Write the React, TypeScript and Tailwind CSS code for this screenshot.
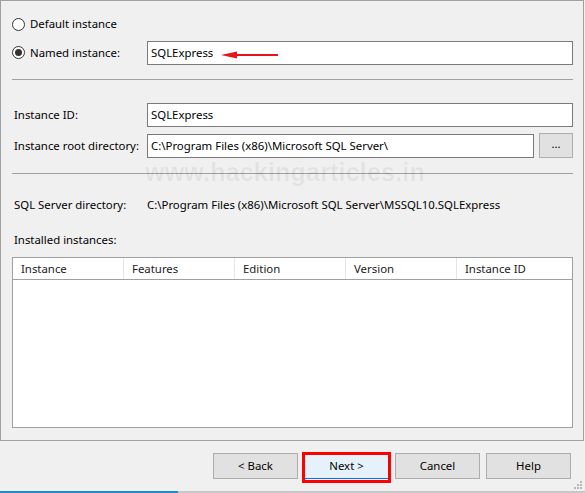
import React from "react";

const FONT = { fontFamily: '"Segoe UI", "Noto Sans", sans-serif' };

function Radio({ checked }: { checked?: boolean }) {
    return (
        <span className="flex h-[13px] w-[13px] items-center justify-center rounded-full border border-[#333333] bg-white">
            {checked && <span className="h-[7px] w-[7px] rounded-full bg-[#333333]" />}
        </span>
    );
}

function Btn({ label, primary }: { label: string; primary?: boolean }) {
    return (
        <div
            className={`flex h-[26px] w-[85px] items-center justify-center border text-black ${
                primary ? "border-[#0078d7] bg-[#e5f1fb]" : "border-[#adadad] bg-[#e1e1e1]"
            }`}
        >
            {label}
        </div>
    );
}

const COLUMNS = ["Instance", "Features", "Edition", "Version", "Instance ID"];

export default function App() {
    return (
        <div className="relative flex h-[493px] w-[585px] flex-col overflow-hidden bg-[#f0f0f0] text-[11.4px] text-black" style={FONT}>
            {/* Main panel */}
            <div className="box-border flex h-[441px] w-[584px] flex-col border border-[#a0a0a0] pl-[11px] pr-[10px]">
                {/* Default instance */}
                <div className="mt-[16px] flex h-[14px] items-center gap-[5px]">
                    <Radio />
                    <span>Default instance</span>
                </div>

                {/* Named instance */}
                <div className="mt-[10px] flex h-[24px] items-center">
                    <div className="flex w-[135px] items-center gap-[5px]">
                        <Radio checked />
                        <span>Named instance:</span>
                    </div>
                    <div className="relative flex h-[24px] flex-1 items-center border border-[#7a7a7a] bg-white pl-[3px]">
                        SQLExpress
                        <svg className="absolute left-[73px] top-[9px]" width="58" height="8" viewBox="0 0 58 8">
                            <path d="M0 4 L16 0.5 L16 7.5 Z" fill="#e8141b" />
                            <path d="M14 4 H57" stroke="#e8141b" strokeWidth="2" />
                        </svg>
                    </div>
                </div>

                <div className="mt-[14px] h-px bg-[#a0a0a0]" />

                {/* Instance ID */}
                <div className="mt-[23px] flex h-[24px] items-center">
                    <span className="w-[135px] pl-[2px]">Instance ID:</span>
                    <div className="flex h-[24px] flex-1 items-center border border-[#7a7a7a] bg-white pl-[3px]">SQLExpress</div>
                </div>

                {/* Instance root directory */}
                <div className="mt-[6px] flex h-[25px] items-center">
                    <span className="w-[135px] pl-[2px]">Instance root directory:</span>
                    <div className="flex h-[24px] flex-1 items-center border border-[#7a7a7a] bg-white pl-[3px]">
                        C:\Program Files (x86)\Microsoft SQL Server\
                    </div>
                    <div className="ml-[5px] flex h-[25px] w-[34px] items-center justify-center border border-[#adadad] bg-[#e1e1e1] pb-[3px]">
                        ...
                    </div>
                </div>

                <div className="mt-[15px] h-px bg-[#a0a0a0]" />

                <div className="mt-[23px] flex h-[16px] items-center">
                    <span className="w-[135px] pl-[2px]">SQL Server directory:</span>
                    <span>C:\Program Files (x86)\Microsoft SQL Server\MSSQL10.SQLExpress</span>
                </div>

                <div className="mt-[19px] flex h-[16px] items-center pl-[2px]">Installed instances:</div>

                {/* Installed instances table */}
                <div className="mt-[9px] flex h-[171px] flex-col border border-[#a0a0a0] bg-white">
                    <div className="flex h-[22px] border-b border-[#a0a0a0]">
                        {COLUMNS.map((c, i) => (
                            <div
                                key={c}
                                className={`flex items-center pl-[8px] text-[#1a1a1a] ${
                                    i < 4 ? "w-[111px] border-r border-[#e5e5e5]" : "flex-1"
                                }`}
                            >
                                {c}
                            </div>
                        ))}
                    </div>
                </div>
            </div>

            {/* Buttons */}
            <div className="relative flex h-[50px] justify-end gap-[6px] pr-[14px] pt-[12px]">
                <Btn label="< Back" />
                <div className="relative">
                    <Btn label="Next >" primary />
                    <div className="absolute -left-[2px] -top-[1px] h-[31px] w-[89px] border-[3px] border-[#ff0000]" />
                </div>
                <Btn label="Cancel" />
                <Btn label="Help" />
                <svg className="absolute bottom-[1px] right-[2px]" width="9" height="9" viewBox="0 0 9 9">
                    <rect x="6" y="0" width="2" height="2" fill="#b8b8b8" />
                    <rect x="3" y="3" width="2" height="2" fill="#b8b8b8" />
                    <rect x="6" y="3" width="2" height="2" fill="#b8b8b8" />
                    <rect x="0" y="6" width="2" height="2" fill="#b8b8b8" />
                    <rect x="3" y="6" width="2" height="2" fill="#b8b8b8" />
                    <rect x="6" y="6" width="2" height="2" fill="#b8b8b8" />
                </svg>
            </div>

            {/* Bottom edge strip */}
            <div className="flex h-[2px]">
                <div className="w-[178px] bg-[#1e8cc0]" />
                <div className="flex-1 bg-[#c8c8c8]" />
            </div>

            {/* Watermark */}
            <div
                className="pointer-events-none absolute left-[145px] top-[154px] text-[25px] font-bold tracking-[0.2px] text-black/[0.06]"
                style={{ fontFamily: '"Liberation Sans", Arial, sans-serif' }}
            >
                www.hackingarticles.in
            </div>
        </div>
    );
}
